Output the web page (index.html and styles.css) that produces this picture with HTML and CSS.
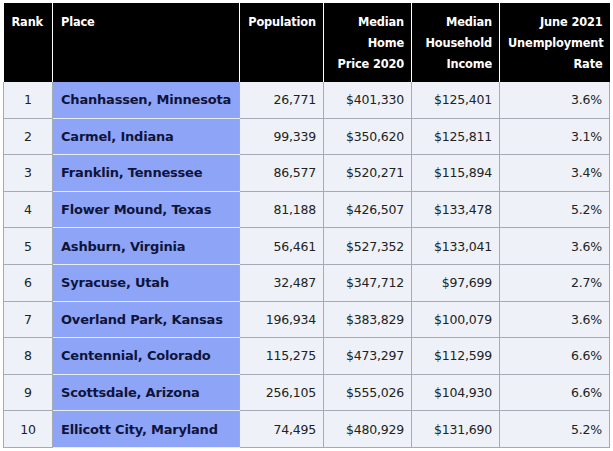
FILE: index.html
```html
<!DOCTYPE html>
<html>
<head>
<meta charset="utf-8">
<link rel="stylesheet" href="styles.css">
</head>
<body>
<table class="rank-table">
  <colgroup>
    <col class="c-rank"><col class="c-place"><col class="c-pop"><col class="c-home"><col class="c-inc"><col class="c-unemp">
  </colgroup>
  <thead>
    <tr>
      <th class="left">Rank</th>
      <th class="left">Place</th>
      <th>Population</th>
      <th>Median<br>Home<br>Price 2020</th>
      <th>Median<br>Household<br>Income</th>
      <th>June 2021<br>Unemployment<br>Rate</th>
    </tr>
  </thead>
  <tbody>
    <tr><td class="rank">1</td><td class="place">Chanhassen, Minnesota</td><td>26,771</td><td>$401,330</td><td>$125,401</td><td>3.6%</td></tr>
    <tr><td class="rank">2</td><td class="place">Carmel, Indiana</td><td>99,339</td><td>$350,620</td><td>$125,811</td><td>3.1%</td></tr>
    <tr><td class="rank">3</td><td class="place">Franklin, Tennessee</td><td>86,577</td><td>$520,271</td><td>$115,894</td><td>3.4%</td></tr>
    <tr><td class="rank">4</td><td class="place">Flower Mound, Texas</td><td>81,188</td><td>$426,507</td><td>$133,478</td><td>5.2%</td></tr>
    <tr><td class="rank">5</td><td class="place">Ashburn, Virginia</td><td>56,461</td><td>$527,352</td><td>$133,041</td><td>3.6%</td></tr>
    <tr><td class="rank">6</td><td class="place">Syracuse, Utah</td><td>32,487</td><td>$347,712</td><td>$97,699</td><td>2.7%</td></tr>
    <tr><td class="rank">7</td><td class="place">Overland Park, Kansas</td><td>196,934</td><td>$383,829</td><td>$100,079</td><td>3.6%</td></tr>
    <tr><td class="rank">8</td><td class="place">Centennial, Colorado</td><td>115,275</td><td>$473,297</td><td>$112,599</td><td>6.6%</td></tr>
    <tr><td class="rank">9</td><td class="place">Scottsdale, Arizona</td><td>256,105</td><td>$555,026</td><td>$104,930</td><td>6.6%</td></tr>
    <tr><td class="rank">10</td><td class="place">Ellicott City, Maryland</td><td>74,495</td><td>$480,929</td><td>$131,690</td><td>5.2%</td></tr>
  </tbody>
</table>
</body>
</html>
```
FILE: styles.css
```css
html, body {
  margin: 0;
  padding: 0;
  background: #ffffff;
}
body {
  padding: 3px 4px 0 3px;
  font-family: "DejaVu Sans", "Open Sans", sans-serif;
}
.rank-table {
  border-collapse: collapse;
  table-layout: fixed;
  width: 606px;
}
.c-rank { width: 49px; }
.c-place { width: 187px; }
.c-pop { width: 84px; }
.c-home { width: 88px; }
.c-inc { width: 88px; }
.c-unemp { width: 110px; }

.rank-table th {
  background: #000000;
  color: #ffffff;
  font-weight: bold;
  font-size: 11.4px;
  line-height: 21px;
  text-align: right;
  vertical-align: top;
  padding: 9px 7px 7px 8px;
  border-left: 1px solid #ffffff;
  height: 63px;
  letter-spacing: -0.15px;
}
.rank-table th:first-child { border-left: none; }
.rank-table th.left { text-align: left; }

.rank-table td {
  background: #eef2f8;
  color: #222222;
  font-size: 12.5px;
  height: 35.6px;
  padding: 0 7px 0 8px;
  text-align: right;
  border: 1px solid #a3abb7;
  white-space: nowrap;
  letter-spacing: -0.2px;
}
.rank-table td.rank { text-align: center; padding: 0; }
.rank-table td.place {
  background: #8ea5f7;
  color: #10143a;
  font-weight: bold;
  font-size: 13px;
  text-align: left;
  border-top: 1px solid #e6ecfb;
  border-bottom: 1px solid #e6ecfb;
}
.rank-table tbody tr:first-child td { border-top: none; }
```
